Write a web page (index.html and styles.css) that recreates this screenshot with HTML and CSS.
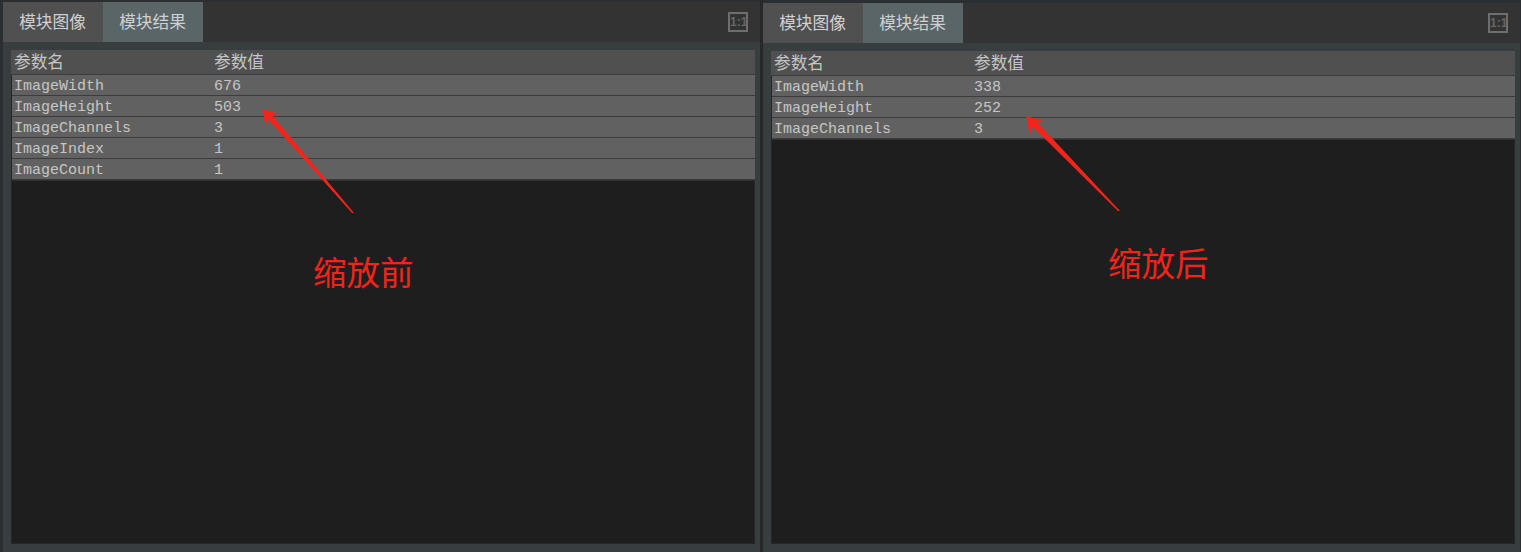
FILE: index.html
```html
<!DOCTYPE html>
<html lang="zh">
<head>
<meta charset="utf-8">
<title>模块结果</title>
<link rel="stylesheet" href="styles.css">
</head>
<body>
<div class="app">
  <section class="panel panel-left">
    <div class="tabbar">
      <div class="tab">模块图像</div>
      <div class="tab tab-active">模块结果</div>
      <div class="ratio">1:1</div>
    </div>
    <div class="body">
      <div class="view">
        <div class="row head"><span>参数名</span><span>参数值</span></div>
        <div class="row"><span>ImageWidth</span><span>676</span></div>
        <div class="row"><span>ImageHeight</span><span>503</span></div>
        <div class="row"><span>ImageChannels</span><span>3</span></div>
        <div class="row"><span>ImageIndex</span><span>1</span></div>
        <div class="row"><span>ImageCount</span><span>1</span></div>
      </div>
    </div>
  </section>
  <div class="divider"></div>
  <section class="panel panel-right">
    <div class="tabbar">
      <div class="tab">模块图像</div>
      <div class="tab tab-active">模块结果</div>
      <div class="ratio">1:1</div>
    </div>
    <div class="body">
      <div class="view">
        <div class="row head"><span>参数名</span><span>参数值</span></div>
        <div class="row"><span>ImageWidth</span><span>338</span></div>
        <div class="row"><span>ImageHeight</span><span>252</span></div>
        <div class="row"><span>ImageChannels</span><span>3</span></div>
      </div>
    </div>
  </section>
</div>
<svg class="arrows" width="1521" height="552" viewBox="0 0 1521 552">
  <polygon class="arrow" points="262,109 279,114 272,115 354,213 352,213 268,119 266,126"/>
  <polygon class="arrow" points="1026,116 1044,121 1037,122 1120,211 1118,211 1033,127 1030,134"/>
</svg>
<div class="note note-before">缩放前</div>
<div class="note note-after">缩放后</div>
</body>
</html>
```

FILE: styles.css
```css
* { box-sizing: border-box; }
html, body { margin: 0; height: 100%; overflow: hidden; }
body {
  position: relative;
  width: 1521px;
  height: 552px;
  background: #2b2f31;
  font-family: "Liberation Mono", "Noto Sans CJK SC", monospace;
  color: #c6c6c6;
}
.app { display: flex; height: 552px; padding-left: 3px; }
.panel { display: flex; flex-direction: column; }
.panel-left { width: 757px; padding-top: 2px; }
.panel-right { width: 757px; padding-top: 3px; }
.divider { width: 3px; background: #26282a; }
.tabbar {
  display: flex;
  align-items: center;
  flex: 0 0 40px;
  background: #333333;
}
.tab {
  display: flex;
  align-items: center;
  justify-content: center;
  width: 100px;
  height: 40px;
  padding: 0 1px 2px 0;
  font-size: 16.7px;
  background: #505050;
  color: #d0d0d0;
}
.tab-active { background: #5a6568; }
.ratio {
  margin-left: auto;
  margin-right: 12px;
  width: 20px;
  height: 20px;
  border: 2px solid #6e6e6e;
  font: bold 12px/16px "Liberation Sans", sans-serif;
  text-align: center;
  color: #666666;
}
.body {
  flex: 1;
  display: flex;
  padding: 8px 5px 8px 8px;
  background: #383d40;
  min-height: 0;
}
.view { flex: 1; background: #1e1e1e; box-shadow: inset 0 0 0 1px #262626; }
.row {
  display: grid;
  grid-template-columns: 200px 1fr;
  height: 21px;
  margin-left: 1px;
  padding-left: 2px;
  font-size: 15px;
  line-height: 23px;
  background: #616161;
  border-bottom: 1px solid #3c3c3c;
}
.row:last-child { box-shadow: 0 1px 0 #303030; }
.row span { height: 20px; overflow: visible; }
.head {
  height: 25px;
  margin-left: 0;
  padding-left: 3px;
  font-size: 16.7px;
  line-height: 28px;
  background: #505050;
}
.arrows { position: absolute; left: 0; top: 0; pointer-events: none; }
.arrow { fill: #f5231a; }
.note {
  position: absolute;
  font-family: "Noto Sans CJK SC", sans-serif;
  font-size: 33.5px;
  line-height: 40px;
  color: #f5231a;
}
.note-before { left: 313px; top: 251px; }
.note-after { left: 1108px; top: 242px; }
```
